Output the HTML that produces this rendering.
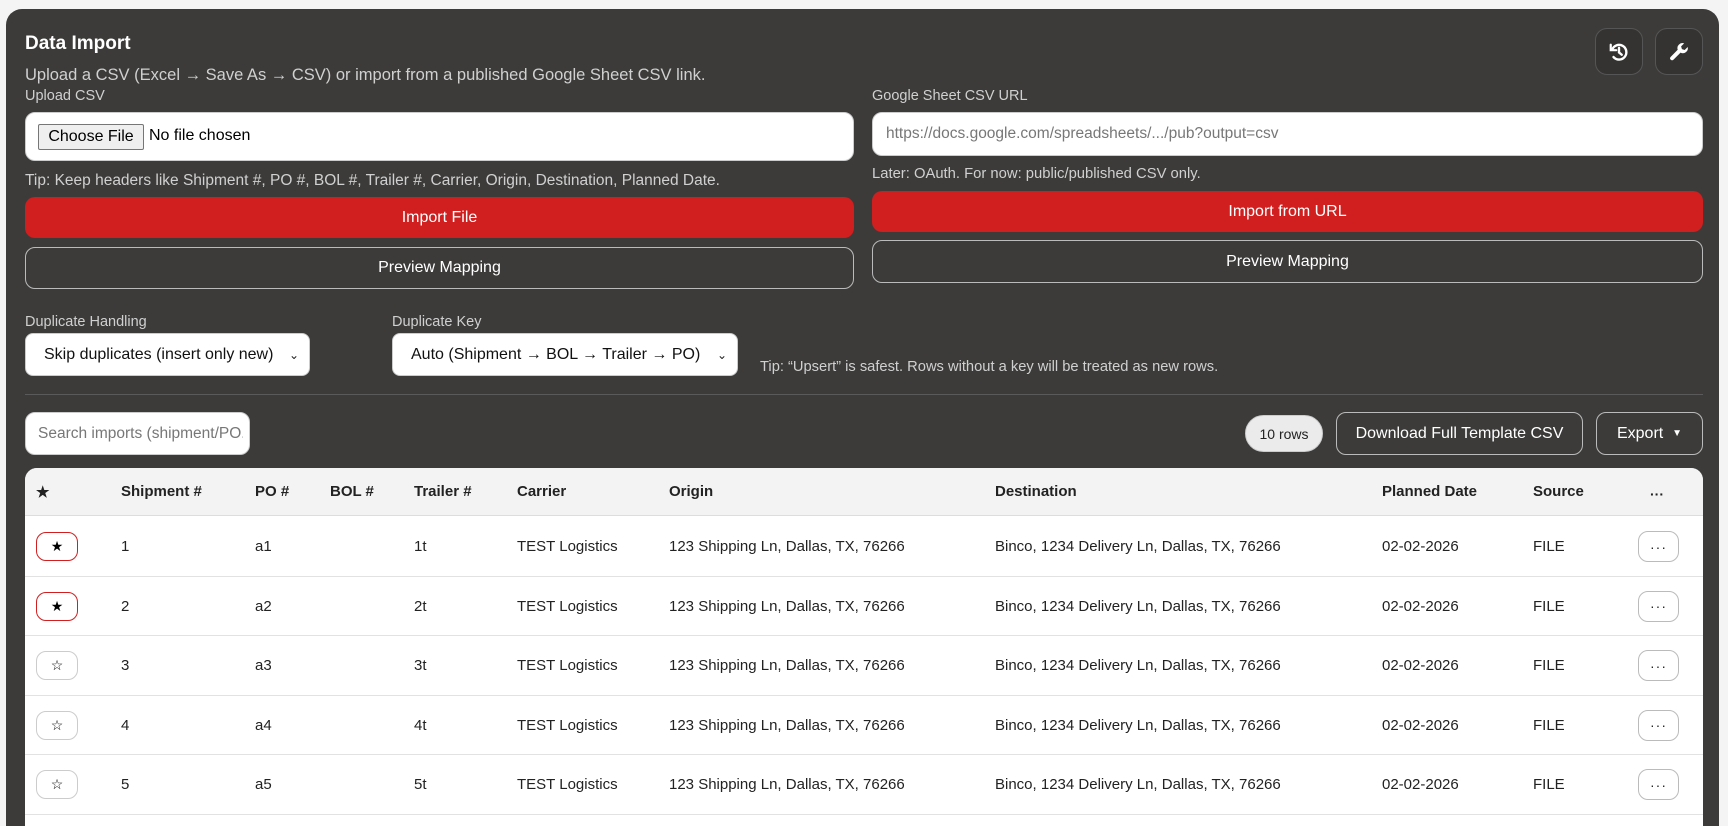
<!DOCTYPE html>
<html style="overflow:hidden"><head><meta charset="utf-8"><style>
*{box-sizing:border-box;margin:0;padding:0}
html,body{width:1728px;height:826px;overflow:hidden}
body{background:#f4f4f4;font-family:"Liberation Sans",Arial,sans-serif;position:relative}
.panel{position:absolute;left:6px;top:9px;width:1713px;height:817px;background:#3c3b3a;border-radius:16px 16px 0 0}
.a{position:absolute}
.t{color:#d0d0d0;font-size:14.5px;white-space:nowrap}
.box{background:#fff;border:1px solid #ccc;border-radius:10px}
.red{background:#d11f1f;border-radius:10px;color:#fff;font-size:16px;display:flex;align-items:center;justify-content:center}
.ob{border:1px solid #bbb;border-radius:10px;color:#fff;font-size:16px;display:flex;align-items:center;justify-content:center}
.sel{background:#fff;border:1px solid #ccc;border-radius:8px;font-size:16px;color:#111;display:flex;align-items:center;padding-left:18px}
.sel span.c{position:absolute;right:10px;font-size:12px}
.ib{border:1px solid #555;background:#343332;border-radius:12px;display:flex;align-items:center;justify-content:center}
.tbl{position:absolute;left:25px;top:468px;width:1678px;height:358px;background:#fff;border-radius:12px 12px 0 0;overflow:hidden}
.hd{position:absolute;left:0;top:0;width:100%;height:48px;background:#f3f3f3;border-bottom:1px solid #ddd}
.c{position:absolute;font-size:15px;color:#222;white-space:nowrap}
.h{font-weight:bold;color:#222}
.row{position:absolute;left:0;width:100%;height:59.5px;border-bottom:1px solid #e2e2e2}
.sb{position:absolute;left:11px;width:42px;height:29px;border:1px solid #ccc;border-radius:10px;font-size:14px;display:flex;align-items:center;justify-content:center;color:#000}
.sb.on{border-color:#d11f1f}
.db{position:absolute;left:1613px;width:41px;height:31px;border:1px solid #bbb;border-radius:10px;display:flex;align-items:center;justify-content:center;font-size:14px;color:#222;letter-spacing:1px}
</style></head><body>
<div class="panel"></div>
<div class="a" style="left:25px;top:33px;color:#fff;font-weight:bold;font-size:19px">Data Import</div>
<div class="a t" style="left:25px;top:66px;font-size:16.5px">Upload a CSV (Excel → Save As → CSV) or import from a published Google Sheet CSV link.</div>
<div class="a t" style="left:25px;top:88px;font-size:14.5px">Upload CSV</div>
<div class="a box" style="left:25px;top:112px;width:829px;height:49px"></div>
<div class="a" style="left:38px;top:124px;height:26px;width:106px;border:1px solid #767676;background:#efefef;border-radius:2px;font-size:16px;color:#000;display:flex;align-items:center;justify-content:center">Choose File</div>
<div class="a" style="left:149px;top:127px;font-size:16px;color:#000">No file chosen</div>
<div class="a t" style="left:25px;top:172px;font-size:15.5px">Tip: Keep headers like Shipment #, PO #, BOL #, Trailer #, Carrier, Origin, Destination, Planned Date.</div>
<div class="a red" style="left:25px;top:197px;width:829px;height:41px">Import File</div>
<div class="a ob" style="left:25px;top:247px;width:829px;height:42px">Preview Mapping</div>

<div class="a t" style="left:872px;top:88px;font-size:14.5px">Google Sheet CSV URL</div>
<div class="a box" style="left:872px;top:112px;width:831px;height:44px"></div>
<div class="a" style="left:886px;top:125px;font-size:15.5px;color:#777">https://docs.google.com/spreadsheets/.../pub?output=csv</div>
<div class="a t" style="left:872px;top:166px;font-size:14.8px">Later: OAuth. For now: public/published CSV only.</div>
<div class="a red" style="left:872px;top:191px;width:831px;height:41px">Import from URL</div>
<div class="a ob" style="left:872px;top:240px;width:831px;height:43px">Preview Mapping</div>

<div class="a ib" style="left:1595px;top:28px;width:48px;height:47px"><svg width="22" height="22" viewBox="0 0 24 24" fill="none" stroke="#fff" stroke-width="2.6" stroke-linecap="round"><path d="M4.5 9.5A8 8 0 1 1 6 17.5"/><path d="M3 4v6h6" stroke-width="2.4"/><path d="M12 7.5v5l3 2.5"/></svg></div>
<div class="a ib" style="left:1655px;top:28px;width:48px;height:47px"><svg width="22" height="22" viewBox="0 0 24 24"><path fill="#fff" d="M21.5 6.5l-3.3 3.3-3-.9-.9-3L17.6 2.6A5.5 5.5 0 0 0 10.6 9.6L2.8 17.4a2.2 2.2 0 0 0 3.1 3.1l7.8-7.8a5.5 5.5 0 0 0 7.8-6.2z"/></svg></div>

<div class="a t" style="left:25px;top:314px;font-size:14.5px">Duplicate Handling</div>
<div class="a sel" style="left:25px;top:333px;width:285px;height:43px">Skip duplicates (insert only new)<span class="c">&#8964;</span></div>
<div class="a t" style="left:392px;top:314px;font-size:14.5px">Duplicate Key</div>
<div class="a sel" style="left:392px;top:333px;width:346px;height:43px">Auto (Shipment → BOL → Trailer → PO)<span class="c">&#8964;</span></div>
<div class="a t" style="left:760px;top:359px;font-size:14.7px">Tip: “Upsert” is safest. Rows without a key will be treated as new rows.</div>
<div class="a" style="left:25px;top:394px;width:1678px;height:1px;background:#5a5a5a"></div>

<div class="a box" style="left:25px;top:412px;width:225px;height:43px"></div>
<div class="a" style="left:38px;top:425px;font-size:15.5px;color:#777;width:205px;overflow:hidden;white-space:nowrap">Search imports (shipment/PO...</div>
<div class="a" style="left:1245px;top:415px;width:78px;height:37px;background:#ebebeb;border:1px solid #ccc;border-radius:19px;font-size:14px;color:#222;display:flex;align-items:center;justify-content:center">10 rows</div>
<div class="a ob" style="left:1336px;top:412px;width:247px;height:43px">Download Full Template CSV</div>
<div class="a ob" style="left:1596px;top:412px;width:107px;height:43px">Export&nbsp;&nbsp;<span style="font-size:10px">&#9660;</span></div>

<div class="tbl">
<div class="hd"></div>
<div class="c h" style="left:11px;top:15px">★</div>
<div class="c h" style="left:96px;top:15px">Shipment #</div>
<div class="c h" style="left:230px;top:15px">PO #</div>
<div class="c h" style="left:305px;top:15px">BOL #</div>
<div class="c h" style="left:389px;top:15px">Trailer #</div>
<div class="c h" style="left:492px;top:15px">Carrier</div>
<div class="c h" style="left:644px;top:15px">Origin</div>
<div class="c h" style="left:970px;top:15px">Destination</div>
<div class="c h" style="left:1357px;top:15px">Planned Date</div>
<div class="c h" style="left:1508px;top:15px">Source</div>
<div class="c h" style="left:1625px;top:18px;font-size:14px">···</div>

<div class="row" style="top:49px"><div class="sb on" style="top:15px">★</div><div class="c" style="left:96px;top:21px">1</div><div class="c" style="left:230px;top:21px">a1</div><div class="c" style="left:389px;top:21px">1t</div><div class="c" style="left:492px;top:21px">TEST Logistics</div><div class="c" style="left:644px;top:21px">123 Shipping Ln, Dallas, TX, 76266</div><div class="c" style="left:970px;top:21px">Binco, 1234 Delivery Ln, Dallas, TX, 76266</div><div class="c" style="left:1357px;top:21px">02-02-2026</div><div class="c" style="left:1508px;top:21px">FILE</div><div class="db" style="top:14px">···</div></div>
<div class="row" style="top:108.5px"><div class="sb on" style="top:15px">★</div><div class="c" style="left:96px;top:21px">2</div><div class="c" style="left:230px;top:21px">a2</div><div class="c" style="left:389px;top:21px">2t</div><div class="c" style="left:492px;top:21px">TEST Logistics</div><div class="c" style="left:644px;top:21px">123 Shipping Ln, Dallas, TX, 76266</div><div class="c" style="left:970px;top:21px">Binco, 1234 Delivery Ln, Dallas, TX, 76266</div><div class="c" style="left:1357px;top:21px">02-02-2026</div><div class="c" style="left:1508px;top:21px">FILE</div><div class="db" style="top:14px">···</div></div>
<div class="row" style="top:168px"><div class="sb" style="top:15px">☆</div><div class="c" style="left:96px;top:21px">3</div><div class="c" style="left:230px;top:21px">a3</div><div class="c" style="left:389px;top:21px">3t</div><div class="c" style="left:492px;top:21px">TEST Logistics</div><div class="c" style="left:644px;top:21px">123 Shipping Ln, Dallas, TX, 76266</div><div class="c" style="left:970px;top:21px">Binco, 1234 Delivery Ln, Dallas, TX, 76266</div><div class="c" style="left:1357px;top:21px">02-02-2026</div><div class="c" style="left:1508px;top:21px">FILE</div><div class="db" style="top:14px">···</div></div>
<div class="row" style="top:227.5px"><div class="sb" style="top:15px">☆</div><div class="c" style="left:96px;top:21px">4</div><div class="c" style="left:230px;top:21px">a4</div><div class="c" style="left:389px;top:21px">4t</div><div class="c" style="left:492px;top:21px">TEST Logistics</div><div class="c" style="left:644px;top:21px">123 Shipping Ln, Dallas, TX, 76266</div><div class="c" style="left:970px;top:21px">Binco, 1234 Delivery Ln, Dallas, TX, 76266</div><div class="c" style="left:1357px;top:21px">02-02-2026</div><div class="c" style="left:1508px;top:21px">FILE</div><div class="db" style="top:14px">···</div></div>
<div class="row" style="top:287px"><div class="sb" style="top:15px">☆</div><div class="c" style="left:96px;top:21px">5</div><div class="c" style="left:230px;top:21px">a5</div><div class="c" style="left:389px;top:21px">5t</div><div class="c" style="left:492px;top:21px">TEST Logistics</div><div class="c" style="left:644px;top:21px">123 Shipping Ln, Dallas, TX, 76266</div><div class="c" style="left:970px;top:21px">Binco, 1234 Delivery Ln, Dallas, TX, 76266</div><div class="c" style="left:1357px;top:21px">02-02-2026</div><div class="c" style="left:1508px;top:21px">FILE</div><div class="db" style="top:14px">···</div></div>
</div>
</body></html>
